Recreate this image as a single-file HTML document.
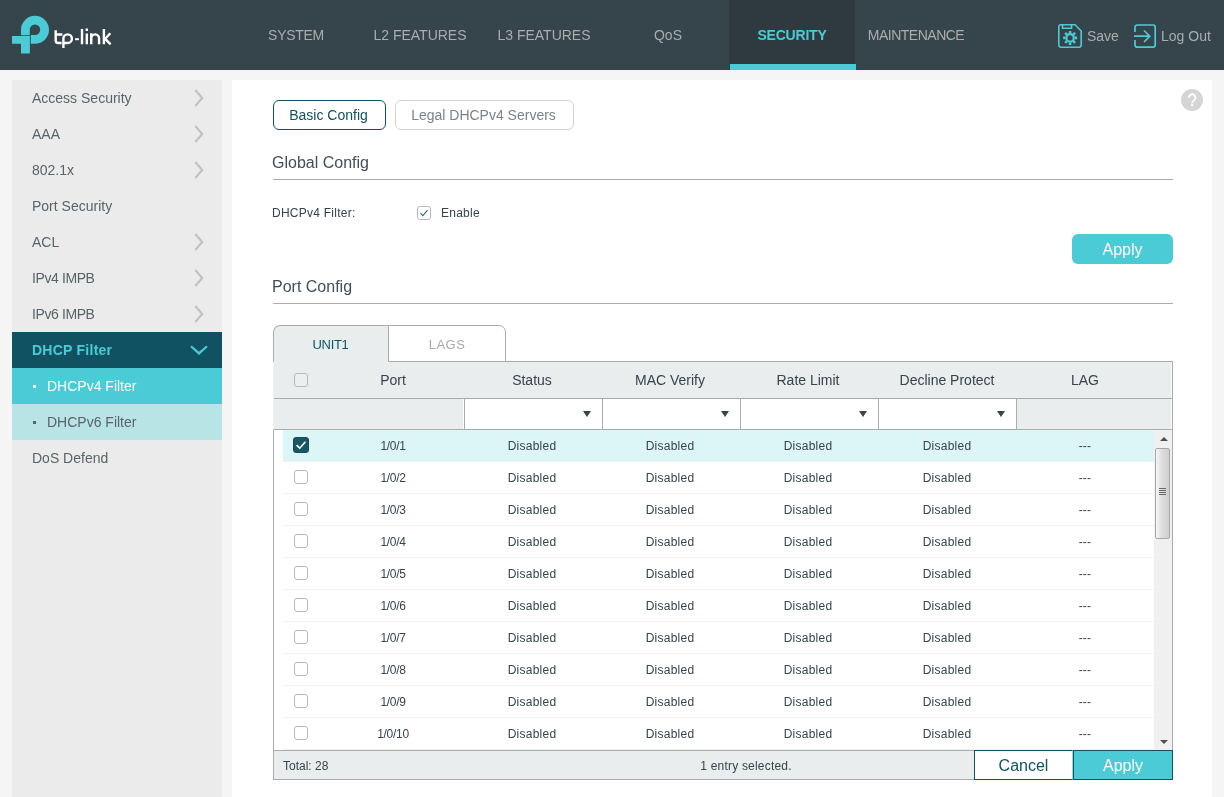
<!DOCTYPE html>
<html>
<head>
<meta charset="utf-8">
<title>DHCPv4 Filter</title>
<style>
*{box-sizing:border-box;margin:0;padding:0}
html,body{width:1224px;height:797px;overflow:hidden;background:#f5f5f5;font-family:"Liberation Sans",sans-serif;color:#36444b}
body{position:relative}
/* header */
#hdr{will-change:transform;position:absolute;left:0;top:0;width:1224px;height:70px;background:#36444b}
.nav{position:absolute;top:0;height:70px;width:124px;text-align:center;line-height:70px;font-size:14px;color:#a9adb0}
.nav.sel{background:#2e3a40;color:#4acbd6;font-weight:bold;width:126px;letter-spacing:-.2px}
.nav.sel:after{content:"";position:absolute;left:1px;bottom:0;width:126px;height:6px;background:#4acbd6}
.hbtn{position:absolute;top:26px;font-size:14px;color:#a9adb0;line-height:20px}
/* sidebar */
#side{will-change:transform;position:absolute;left:12px;top:80px;width:210px;height:717px;background:#ebebeb}
.mi{position:absolute;left:0;width:210px;height:36px;line-height:36px;padding-left:20px;font-size:14px;color:#586469}
.mi svg{position:absolute}
.mi.open{background:#105261;color:#4acbd6;font-weight:bold;letter-spacing:.25px}
.sub{position:absolute;left:0;width:210px;height:36px;line-height:36px;padding-left:35px;font-size:14px}
.sub i{position:absolute;left:21px;top:17px;width:3px;height:3px}
/* main */
#main{will-change:transform;position:absolute;left:232px;top:80px;width:980px;height:717px;background:#fff}
#main>*{position:absolute}
.tabbtn{top:20px;height:30px;border:1px solid #d0d3d4;border-radius:6px;line-height:28px;text-align:center;font-size:14px;color:#7a8388;background:#fff}
.tabbtn.sel{border-color:#105261;color:#105261}
.h2{left:40px;font-size:16px;color:#414f56;line-height:20px}
.hr{left:41px;width:900px;height:1px;background:#a9acad}
.btn{width:101px;height:30px;background:#4acbd6;color:#fff;font-size:16px;line-height:30px;text-align:center}
/* table */
.th{top:282px;height:36px;line-height:36px;font-size:14px;text-align:center;color:#36444b;width:138px}
.sb{top:319px;height:30px;width:138px;background:#fff;border-left:1px solid #a9acad;box-shadow:-1px 0 0 #fff}
.sb:after{content:"";position:absolute;left:118px;top:12px;border-left:4.5px solid transparent;border-right:4.5px solid transparent;border-top:6px solid #36444b}
.row{left:51px;width:871px;height:32px;border-bottom:1px solid #f2f2f2;font-size:12px;letter-spacing:.25px;line-height:32.6px;color:#36444b}
.row span{position:absolute;top:0;text-align:center;width:138px}
.row.on{background:#dcf5f6}
.row span.p{letter-spacing:-.3px}
.cb{position:absolute;left:11px;top:8px;width:14px;height:14px;border:1px solid #b5b9bb;border-radius:3px;background:#fff}
.cbon{position:absolute;left:10px;top:7px;width:16px;height:16px;border-radius:3px;background:#1a5664;border:1px solid #0e4c5b}
</style>
</head>

<body>
<div id="hdr">
<svg style="position:absolute;left:10px;top:14px" width="110" height="42" viewBox="10 14 110 42">
<path d="M21 35.2 V29.8 A14 14 0 1 1 35 43.8 H30.8 V35 H35 A5.2 5.2 0 1 0 29.8 29.8 V35.2 Z" fill="#4acbd6"/>
<path d="M12 36 H29.9 V53.6 H21 V43.8 H12 Z" fill="#4acbd6"/>
<g fill="none" stroke="#fff" stroke-width="2.4" stroke-linejoin="round">
<path d="M55.7 30.3 V40.4 Q55.7 43 58.3 43 H61.6 M55.7 34.5 H62.4"/>
<path d="M63.4 48 V38.7 A4.25 4.3 0 1 1 67.65 43 H62.6"/>
<path d="M75.1 39.2 H78.9" stroke-width="2"/>
<path d="M82 29.1 V44.2 M86.8 33.5 V44.2 M86.8 28.5 V31"/>
<path d="M91.25 44.2 V33.3 M91.25 38.6 A3.91 4.2 0 0 1 99.07 38.6 V44.2"/>
<path d="M103.9 29.1 V44.2 M110.3 33.3 L105.2 38.8 L110.6 44.4"/>
</g>
</svg>
<div class="nav" style="left:234px;letter-spacing:-.3px">SYSTEM</div>
<div class="nav" style="left:358px">L2 FEATURES</div>
<div class="nav" style="left:482px">L3 FEATURES</div>
<div class="nav" style="left:606px">QoS</div>
<div class="nav sel" style="left:729px">SECURITY</div>
<div class="nav" style="left:854px;letter-spacing:-.5px">MAINTENANCE</div>
<svg style="position:absolute;left:1057px;top:23px" width="26" height="26" viewBox="0 0 26 26" fill="none" stroke="#4acbd6" stroke-width="1.6">
<path d="M3.5 1.8 H18 L24.2 8 V22 A2.2 2.2 0 0 1 22 24.2 H3.5 A2.2 2.2 0 0 1 1.8 22 V3.5 A1.7 1.7 0 0 1 3.5 1.8 Z"/>
<path d="M5.5 2 V5.2 H14.5 V2"/>
<circle cx="13.1" cy="14.9" r="3.7" stroke-width="2.2"/>
<g stroke-width="2.6"><path d="M13.1 7.9v2.4M13.1 19.5v2.4M6.1 14.9h2.4M17.7 14.9h2.4M8.15 9.95l1.7 1.7M16.35 18.15l1.7 1.7M8.15 19.85l1.7-1.7M16.35 11.65l1.7-1.7"/></g>
</svg>
<div class="hbtn" style="left:1087px">Save</div>
<svg style="position:absolute;left:1132px;top:23px" width="26" height="26" viewBox="0 0 26 26" fill="none" stroke="#4acbd6" stroke-width="1.7">
<path d="M3 9 V4.2 A2.2 2.2 0 0 1 5.2 2 H21 A2.2 2.2 0 0 1 23.2 4.2 V22 A2.2 2.2 0 0 1 21 24.2 H5.2 A2.2 2.2 0 0 1 3 22 V17"/>
<path d="M2 13.2 H17.5 M12 7.5 L17.8 13.2 L12 19"/>
</svg>
<div class="hbtn" style="left:1161px">Log Out</div>
</div>

<div id="side">
<div class="mi" style="top:0">Access Security<svg style="left:182px;top:9px" width="12" height="18" viewBox="0 0 12 18"><path d="M1.3 1 L8.2 9 L1.3 17" fill="none" stroke="#bec1c3" stroke-width="2"/></svg></div>
<div class="mi" style="top:36px">AAA<svg style="left:182px;top:9px" width="12" height="18" viewBox="0 0 12 18"><path d="M1.3 1 L8.2 9 L1.3 17" fill="none" stroke="#bec1c3" stroke-width="2"/></svg></div>
<div class="mi" style="top:72px">802.1x<svg style="left:182px;top:9px" width="12" height="18" viewBox="0 0 12 18"><path d="M1.3 1 L8.2 9 L1.3 17" fill="none" stroke="#bec1c3" stroke-width="2"/></svg></div>
<div class="mi" style="top:108px">Port Security</div>
<div class="mi" style="top:144px">ACL<svg style="left:182px;top:9px" width="12" height="18" viewBox="0 0 12 18"><path d="M1.3 1 L8.2 9 L1.3 17" fill="none" stroke="#bec1c3" stroke-width="2"/></svg></div>
<div class="mi" style="top:180px;letter-spacing:-.4px">IPv4 IMPB<svg style="left:182px;top:9px" width="12" height="18" viewBox="0 0 12 18"><path d="M1.3 1 L8.2 9 L1.3 17" fill="none" stroke="#bec1c3" stroke-width="2"/></svg></div>
<div class="mi" style="top:216px;letter-spacing:-.4px">IPv6 IMPB<svg style="left:182px;top:9px" width="12" height="18" viewBox="0 0 12 18"><path d="M1.3 1 L8.2 9 L1.3 17" fill="none" stroke="#bec1c3" stroke-width="2"/></svg></div>
<div class="mi open" style="top:252px">DHCP Filter<svg style="left:178px;top:12px" width="18" height="12" viewBox="0 0 18 12"><path d="M1 2.2 L9 9.4 L17 2.2" fill="none" stroke="#4acbd6" stroke-width="2.2"/></svg></div>
<div class="sub" style="top:288px;background:#4acbd6;color:#fff"><i style="background:#fff"></i>DHCPv4 Filter</div>
<div class="sub" style="top:324px;background:#b9e4e6;color:#586469"><i style="background:#586469"></i>DHCPv6 Filter</div>
<div class="mi" style="top:360px">DoS Defend</div>
</div>

<div id="main">
<div class="tabbtn sel" style="left:41px;width:113px;text-indent:-2px">Basic Config</div>
<div class="tabbtn" style="left:163px;width:179px;text-indent:-2px">Legal DHCPv4 Servers</div>
<svg style="left:949px;top:9px" width="22" height="22" viewBox="0 0 22 22"><circle cx="11" cy="11" r="11" fill="#d5d5d6"/><path d="M7.9 9 A3.25 3.4 0 1 1 13.2 11.3 Q11.2 12.7 11.2 14.3 M11.2 15.3 V17.3" fill="none" stroke="#fff" stroke-width="2"/></svg>
<div class="h2" style="top:73px">Global Config</div>
<div class="hr" style="top:99px"></div>
<div style="left:40px;top:125px;font-size:12px;letter-spacing:.25px;line-height:16px">DHCPv4 Filter:</div>
<div style="left:185px;top:126px;width:14px;height:14px;border:1px solid #b5b9bb;border-radius:3px"><svg width="12" height="12" viewBox="0 0 12 12" style="display:block"><path d="M2.4 6.2 L4.8 8.6 L9.6 3.2" fill="none" stroke="#2d6b78" stroke-width="1.1"/></svg></div>
<div style="left:209px;top:125px;font-size:12px;letter-spacing:.25px;line-height:16px">Enable</div>
<div class="btn" style="left:840px;top:154px;border-radius:6px;line-height:32px">Apply</div>
<div class="h2" style="top:197px">Port Config</div>
<div class="hr" style="top:223px"></div>
<!-- tabs -->
<div style="left:41px;top:245px;width:116px;height:37px;background:#e9eded;border:1px solid #a9acad;border-bottom:none;border-radius:7px 0 0 0;font-size:13px;line-height:38px;text-align:center;color:#105261;letter-spacing:-.3px;text-indent:-1px">UNIT1</div>
<div style="left:156px;top:245px;width:118px;height:37px;background:#fff;border:1px solid #a9acad;border-radius:0 7px 0 0;font-size:13px;line-height:38px;text-align:center;color:#a7a9ac;letter-spacing:.5px">LAGS</div>
<!-- table head -->
<div style="left:41px;top:281px;width:900px;height:69px;background:#e9eded;border:1px solid #a9acad;border-left-color:#eef1f1"></div>
<div style="left:42px;top:281px;width:114px;height:2px;background:#e9eded"></div>
<div style="left:939px;top:282px;width:1px;height:67px;background:#fafbfb"></div>
<div style="left:42px;top:318px;width:899px;height:1px;background:#a9acad"></div>
<div style="left:62px;top:293px;width:14px;height:14px;border:1px solid #b5b9bb;border-radius:3px;background:#eceff0"></div>
<div class="th" style="left:92px">Port</div>
<div class="th" style="left:231px">Status</div>
<div class="th" style="left:369px">MAC Verify</div>
<div class="th" style="left:507px">Rate Limit</div>
<div class="th" style="left:646px">Decline Protect</div>
<div class="th" style="left:784px">LAG</div>
<div class="sb" style="left:232px"></div>
<div class="sb" style="left:370px"></div>
<div class="sb" style="left:508px"></div>
<div class="sb" style="left:646px;border-right:1px solid #a9acad;width:139px"></div>
<!-- body -->
<div style="left:41px;top:350px;width:900px;height:321px;border-left:1px solid #a9acad;border-right:1px solid #a9acad"></div>
<div class="row on" style="top:350px"><b class="cbon"><svg width="16" height="16" viewBox="0 0 16 16" style="display:block;margin:-1px"><path d="M3.6 8.2 L6.8 11.2 L12.4 4.8" fill="none" stroke="#fff" stroke-width="1.6"/></svg></b><span class="p" style="left:41px">1/0/1</span><span style="left:180px">Disabled</span><span style="left:318px">Disabled</span><span style="left:456px">Disabled</span><span style="left:595px">Disabled</span><span style="left:733px">---</span></div>
<div class="row" style="top:382px"><b class="cb"></b><span class="p" style="left:41px">1/0/2</span><span style="left:180px">Disabled</span><span style="left:318px">Disabled</span><span style="left:456px">Disabled</span><span style="left:595px">Disabled</span><span style="left:733px">---</span></div>
<div class="row" style="top:414px"><b class="cb"></b><span class="p" style="left:41px">1/0/3</span><span style="left:180px">Disabled</span><span style="left:318px">Disabled</span><span style="left:456px">Disabled</span><span style="left:595px">Disabled</span><span style="left:733px">---</span></div>
<div class="row" style="top:446px"><b class="cb"></b><span class="p" style="left:41px">1/0/4</span><span style="left:180px">Disabled</span><span style="left:318px">Disabled</span><span style="left:456px">Disabled</span><span style="left:595px">Disabled</span><span style="left:733px">---</span></div>
<div class="row" style="top:478px"><b class="cb"></b><span class="p" style="left:41px">1/0/5</span><span style="left:180px">Disabled</span><span style="left:318px">Disabled</span><span style="left:456px">Disabled</span><span style="left:595px">Disabled</span><span style="left:733px">---</span></div>
<div class="row" style="top:510px"><b class="cb"></b><span class="p" style="left:41px">1/0/6</span><span style="left:180px">Disabled</span><span style="left:318px">Disabled</span><span style="left:456px">Disabled</span><span style="left:595px">Disabled</span><span style="left:733px">---</span></div>
<div class="row" style="top:542px"><b class="cb"></b><span class="p" style="left:41px">1/0/7</span><span style="left:180px">Disabled</span><span style="left:318px">Disabled</span><span style="left:456px">Disabled</span><span style="left:595px">Disabled</span><span style="left:733px">---</span></div>
<div class="row" style="top:574px"><b class="cb"></b><span class="p" style="left:41px">1/0/8</span><span style="left:180px">Disabled</span><span style="left:318px">Disabled</span><span style="left:456px">Disabled</span><span style="left:595px">Disabled</span><span style="left:733px">---</span></div>
<div class="row" style="top:606px"><b class="cb"></b><span class="p" style="left:41px">1/0/9</span><span style="left:180px">Disabled</span><span style="left:318px">Disabled</span><span style="left:456px">Disabled</span><span style="left:595px">Disabled</span><span style="left:733px">---</span></div>
<div class="row" style="top:638px"><b class="cb"></b><span class="p" style="left:41px">1/0/10</span><span style="left:180px">Disabled</span><span style="left:318px">Disabled</span><span style="left:456px">Disabled</span><span style="left:595px">Disabled</span><span style="left:733px">---</span></div>
<!-- scrollbar -->
<div style="left:922px;top:350px;width:18px;height:320px;background:#f0f0f0"></div>
<div style="left:923px;top:368px;width:15px;height:91px;border:1px solid #a8a8a8;border-radius:2px;background:linear-gradient(90deg,#f6f6f6,#dedede 45%,#cdcdcd)"></div>
<div style="left:927px;top:408px;width:7px;height:1px;background:#6a6a6a;box-shadow:0 2px 0 #6a6a6a,0 4px 0 #6a6a6a,0 6px 0 #6a6a6a"></div>
<div style="left:928px;top:357px;border-left:4px solid transparent;border-right:4px solid transparent;border-bottom:4px solid #505050"></div>
<div style="left:928px;top:660px;border-left:4px solid transparent;border-right:4px solid transparent;border-top:4px solid #505050"></div>
<!-- footer -->
<div style="left:41px;top:670px;width:900px;height:30px;background:#e9eded;border:1px solid #a9acad"></div>
<div style="left:51px;top:678px;font-size:12px;line-height:16px">Total: 28</div>
<div style="left:414px;top:678px;width:200px;text-align:center;font-size:12px;letter-spacing:.2px;line-height:16px">1 entry selected.</div>
<div style="left:742px;top:670px;width:99px;height:30px;border:1px solid #105261;border-right-color:#8fdde4;background:#fff;color:#105261;font-size:16px;line-height:29.5px;text-align:center">Cancel</div>
<div class="btn" style="left:841px;top:670px;width:100px;border:1px solid #105261;line-height:29.5px">Apply</div>
</div>
</body>
</html>
